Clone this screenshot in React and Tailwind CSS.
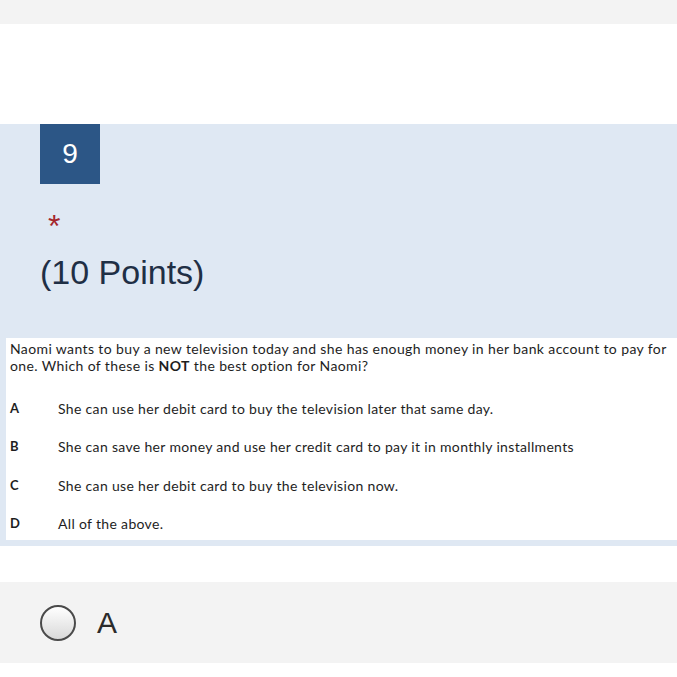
const options = [
  { letter: 'A', text: 'She can use her debit card to buy the television later that same day.', gap: 'mt-[26px]' },
  { letter: 'B', text: 'She can save her money and use her credit card to pay it in monthly installments', gap: 'mt-[21px]' },
  { letter: 'C', text: 'She can use her debit card to buy the television now.', gap: 'mt-[22px]' },
  { letter: 'D', text: 'All of the above.', gap: 'mt-[21px]' },
];

const App = () => {
  return (
    <div className="w-[677px] min-h-[677px] bg-white font-['Liberation_Sans',Arial,sans-serif]">
      <div className="h-[24px] bg-[#f3f3f3]" />
      <div className="h-[100px] bg-white" />

      {/* Question header */}
      <div className="bg-[#dfe8f3] pb-[6px]">
        <div className="pl-[40px]">
          <div className="w-[60px] h-[60px] bg-[#2c5686] flex items-center justify-center text-white text-[28px] leading-none">
            9
          </div>
        </div>
        <div className="pl-[48px] mt-[26px] h-[42px] text-[#a4262c] text-[32px] leading-[32px]">*</div>
        <div className="pl-[40px] text-[#1f2f45] text-[34px] leading-[40px]">(10 Points)</div>

        {/* Question image */}
        <div className="ml-[6px] mt-[46px] bg-white pl-[4px] pt-[2px] pb-[8px] text-[#1e1e1e] font-['Lato','Liberation_Sans',sans-serif]">
          <p className="text-[14px] leading-[17px] tracking-[0.38px]">
            Naomi wants to buy a new television today and she has enough money in her bank account to pay for one. Which of these is <b>NOT</b> the best option for Naomi?
          </p>
          {options.map((o) => (
            <div key={o.letter} className={`flex text-[14px] leading-[17px] ${o.gap}`}>
              <span className="w-[48px] font-bold text-[13px]">{o.letter}</span>
              <span className="tracking-[0.33px]">{o.text}</span>
            </div>
          ))}
        </div>
      </div>

      <div className="h-[36px] bg-white" />

      {/* Answer choice */}
      <div className="h-[81px] bg-[#f3f3f3] flex items-center pl-[40px]">
        <span className="w-[36px] h-[36px] rounded-full border-2 border-[#4a4a4a] bg-gradient-to-b from-white to-[#d9d9d9]" />
        <span className="ml-[21px] text-[30px] text-[#2b2b2b] leading-none">A</span>
      </div>
    </div>
  );
};

export default App;
